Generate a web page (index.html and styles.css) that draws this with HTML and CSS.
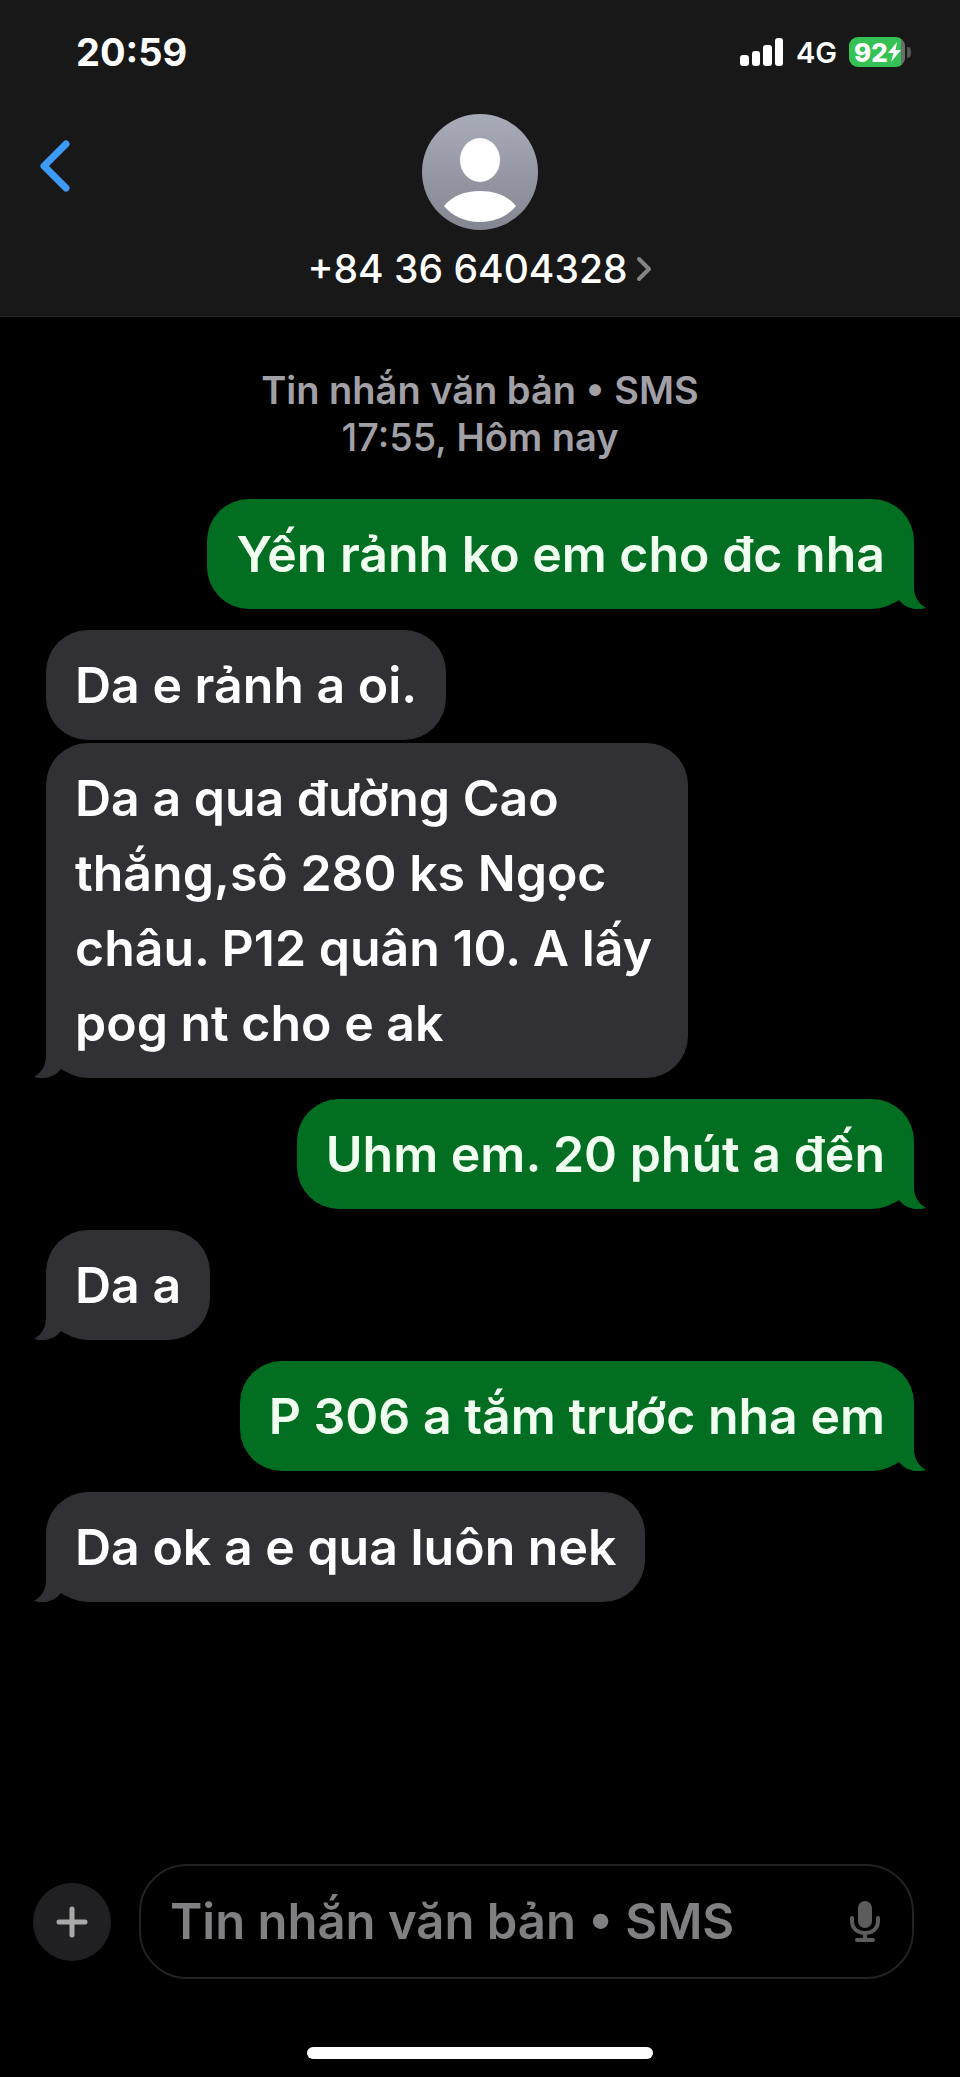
FILE: index.html
```
<!DOCTYPE html>
<html lang="vi">
<head>
<meta charset="utf-8">
<meta name="viewport" content="width=device-width, initial-scale=1">
<title>+84 36 6404328</title>
<link rel="stylesheet" href="styles.css">
</head>
<body>
<svg class="defs" aria-hidden="true">
  <symbol id="tail" viewBox="0 0 32 44"><path d="M0 0H20V22C20 32 25 39 32 43C22 46 11 43 5 35L0 38Z"/></symbol>
</svg>
<div class="app">
  <header class="header">
    <div class="status">
      <time class="clock">20:59</time>
      <div class="indicators">
        <svg class="signal" viewBox="0 0 44 28" fill="#fff" aria-hidden="true">
          <rect x="0" y="17" width="9" height="11" rx="3"/>
          <rect x="12" y="13" width="8" height="15" rx="3"/>
          <rect x="23" y="7" width="9" height="21" rx="3"/>
          <rect x="35" y="0" width="8" height="28" rx="3"/>
        </svg>
        <span class="network">4G</span>
        <span class="battery">
          <span class="battery-body">92<svg class="bolt" viewBox="0 0 13 20" fill="#fff" aria-hidden="true"><path d="M9 0L0 11H5.500L3 20L13 8H7.500Z"/></svg></span>
          <span class="battery-cap"></span>
        </span>
      </div>
    </div>
    <div class="nav">
      <button class="back" type="button" aria-label="Quay lại">
        <svg viewBox="0 0 30 52" fill="none" stroke="#3d9bf7" stroke-width="7" stroke-linecap="round" stroke-linejoin="round" aria-hidden="true"><path d="M26 4L4 26L26 48"/></svg>
      </button>
      <button class="contact" type="button">
        <svg class="avatar" viewBox="0 0 116 116" aria-hidden="true">
          <defs><linearGradient id="avatar-bg" x1="0" y1="0" x2="0" y2="1"><stop offset="0" stop-color="#a8abb8"/><stop offset="1" stop-color="#848692"/></linearGradient></defs>
          <circle cx="58" cy="58" r="58" fill="url(#avatar-bg)"/>
          <ellipse cx="58" cy="46" rx="20" ry="22" fill="#fff"/>
          <path d="M22 92C30 82 43 77 58 77C73 77 86 82 94 92C86 102 73 108 58 108C43 108 30 102 22 92Z" fill="#fff"/>
        </svg>
        <span class="number">+84 36 6404328
          <svg class="chevron" viewBox="0 0 16 26" fill="none" stroke="#858585" stroke-width="4" stroke-linecap="round" stroke-linejoin="round" aria-hidden="true"><path d="M3 3L13 13L3 23"/></svg>
        </span>
      </button>
    </div>
  </header>

  <main class="thread">
    <p class="stamp"><strong>Tin nhắn văn bản • SMS</strong><br>17:55, <strong>Hôm nay</strong></p>
    <p class="bubble sent first">Yến rảnh ko em cho đc nha<svg class="tail" aria-hidden="true"><use href="#tail"/></svg></p>
    <p class="bubble received">Da e rảnh a oi.</p>
    <p class="bubble received joined">Da a qua đường Cao thắng,sô 280 ks Ngọc châu. P12 quân 10. A lấy pog nt cho e ak<svg class="tail" aria-hidden="true"><use href="#tail"/></svg></p>
    <p class="bubble sent">Uhm em. 20 phút a đến<svg class="tail" aria-hidden="true"><use href="#tail"/></svg></p>
    <p class="bubble received">Da a<svg class="tail" aria-hidden="true"><use href="#tail"/></svg></p>
    <p class="bubble sent">P 306 a tắm trước nha em<svg class="tail" aria-hidden="true"><use href="#tail"/></svg></p>
    <p class="bubble received">Da ok a e qua luôn nek<svg class="tail" aria-hidden="true"><use href="#tail"/></svg></p>
  </main>

  <footer class="footer">
    <form class="composer">
      <button class="add" type="button" aria-label="Thêm">
        <svg viewBox="0 0 32 32" stroke="#a9a9a9" stroke-width="5" stroke-linecap="round" aria-hidden="true"><path d="M16 3V29M3 16H29"/></svg>
      </button>
      <div class="field">
        <input class="entry" type="text" aria-label="Tin nhắn" placeholder="Tin nhắn văn bản • SMS">
        <button class="mic" type="button" aria-label="Đọc chính tả">
          <svg viewBox="0 0 30 42" fill="none" stroke="#5c5c5c" stroke-width="4" stroke-linecap="round" aria-hidden="true"><rect x="8" y="0" width="14" height="27" rx="7" fill="#5c5c5c" stroke="none"/><path d="M2 17V20C2 28 8 32 15 32C22 32 28 28 28 20V17M15 32V38M7 39H23"/></svg>
        </button>
      </div>
    </form>
    <div class="home"></div>
  </footer>
</div>
</body>
</html>
```
FILE: styles.css
```
* { box-sizing: border-box; }

body {
  margin: 0;
  background: #000;
  color: #fff;
  font-family: Inter, "Liberation Sans", sans-serif;
}

button, input {
  margin: 0;
  padding: 0;
  border: 0;
  background: none;
  color: inherit;
  font: inherit;
}

svg { display: block; }

.defs {
  position: absolute;
  width: 0;
  height: 0;
}

.app {
  display: flex;
  flex-direction: column;
  min-height: 100vh;
}

/* Header */
.header {
  padding: 32px 40px 23px;
  background: #181818;
  border-bottom: 1px solid #222;
}

.status {
  display: flex;
  align-items: center;
  justify-content: space-between;
  height: 40px;
  padding: 0 9px 0 36px;
}

.clock {
  font-size: 38px;
  font-weight: 700;
  line-height: 40px;
}

.indicators {
  display: flex;
  align-items: center;
  gap: 12px;
}

.signal {
  width: 44px;
  height: 28px;
}

.network {
  font-size: 29px;
  font-weight: 600;
}

.battery {
  display: flex;
  align-items: center;
  gap: 2px;
}

.battery-body {
  display: flex;
  align-items: center;
  width: 56px;
  height: 30px;
  padding-left: 5px;
  border-radius: 9px;
  background: linear-gradient(90deg, #34c255 92%, #66706a 92%);
  font-size: 26px;
  font-weight: 800;
}

.bolt {
  width: 13px;
  height: 20px;
}

.battery-cap {
  width: 4px;
  height: 11px;
  border-radius: 0 4px 4px 0;
  background: #555;
}

.nav {
  display: grid;
  grid-template-columns: 1fr auto 1fr;
  align-items: start;
  padding-top: 42px;
}

.back {
  width: 30px;
  height: 52px;
  margin-top: 26px;
}

.contact {
  display: flex;
  flex-direction: column;
  align-items: center;
  gap: 15px;
}

.avatar {
  width: 116px;
  height: 116px;
}

.number {
  display: flex;
  align-items: center;
  gap: 9px;
  font-size: 39px;
  font-weight: 500;
  line-height: 48px;
}

.chevron {
  width: 16px;
  height: 26px;
}

/* Conversation */
.thread {
  display: flex;
  flex: 1;
  flex-direction: column;
  padding: 50px 46px 48px;
}

.stamp {
  margin: 0 0 38px;
  color: #a1a0a6;
  font-size: 38px;
  font-weight: 500;
  line-height: 47px;
  text-align: center;
}

.stamp strong { font-weight: 600; }

.bubble {
  position: relative;
  max-width: 74%;
  margin: 21px 0 0;
  padding: 18px 29px 17px;
  border-radius: 42px;
  font-size: 50px;
  font-weight: 600;
  line-height: 75px;
}

.first { margin-top: 0; }

.joined { margin-top: 3px; }

.sent {
  align-self: flex-end;
  max-width: 84%;
  background: #026e22;
  color: #f0fff0;
  fill: #026e22;
}

.received {
  align-self: flex-start;
  background: #313035;
  fill: #313035;
}

.tail {
  position: absolute;
  right: -12px;
  bottom: 0;
  width: 32px;
  height: 44px;
}

.received .tail {
  right: auto;
  left: -12px;
  transform: scaleX(-1);
}

/* Composer */
.footer { padding-bottom: 18px; }

.composer {
  display: flex;
  align-items: center;
  gap: 28px;
  padding: 0 46px 0 33px;
}

.add {
  display: grid;
  flex: none;
  place-items: center;
  width: 78px;
  height: 78px;
  border-radius: 50%;
  background: #202023;
}

.add svg {
  width: 32px;
  height: 32px;
}

.field {
  display: flex;
  flex: 1;
  align-items: center;
  min-width: 0;
  height: 115px;
  padding: 0 32px 0 29px;
  border: 2px solid #222;
  border-radius: 48px;
}

.entry {
  flex: 1;
  min-width: 0;
  height: 100%;
  outline: 0;
  font-size: 49px;
  font-weight: 600;
}

.entry::placeholder {
  color: #808083;
  opacity: 1;
}

.mic svg {
  width: 30px;
  height: 42px;
}

.home {
  width: 36%;
  height: 12px;
  margin: 68px auto 0;
  border-radius: 6px;
  background: #fff;
}
```
